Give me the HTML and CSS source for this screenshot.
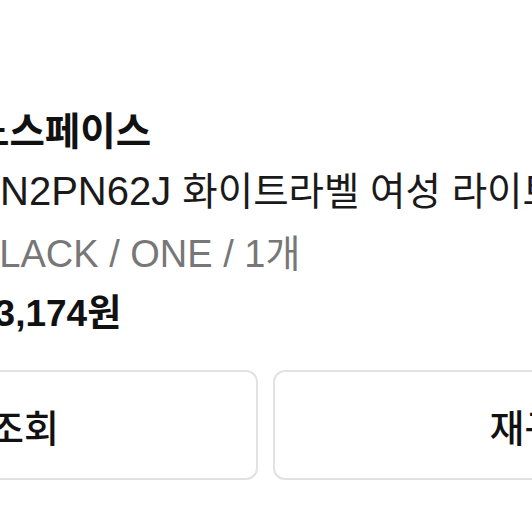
FILE: index.html
```html
<!DOCTYPE html>
<html lang="ko">
  <head>
    <meta charset="UTF-8" />
    <meta name="viewport" content="width=device-width, initial-scale=1.0" />
    <title>주문상세</title>
    <link rel="stylesheet" href="styles.css">
  </head>
  <body>
    <div class="order">
      <div class="info">
        <div class="brand">노스페이스</div>
        <div class="name"><span class="code">N2PN62J </span>화이트라벨 여성 라이트 다운 자켓</div>
        <div class="option">BLACK / ONE / 1개</div>
        <div class="price">83,174원</div>
      </div>
      <div class="btns">
        <button class="btn">배송조회</button>
        <button class="btn">재구매</button>
      </div>
    </div>
  </body>
</html>
```

FILE: styles.css
```css
body {
  margin: 0;
  background-color: white;
  overflow: hidden;
  font-family: "Liberation Sans", "Noto Sans CJK KR", sans-serif;
  color: #111;
}
.order {
  padding-top: 102px;
}
.info {
  margin-left: -26px;
  white-space: nowrap;
}
.brand,
.name,
.option,
.price {
  font-size: 38.5px;
  line-height: 60px;
}
.brand {
  font-weight: bold;
}
.name {
  color: #1a1a1a;
  margin-left: 26px;
}
.code {
  font-size: 40px;
  line-height: 1;
}
.option {
  color: #777;
  font-size: 38px;
  margin-top: 2px;
}
.price {
  font-weight: bold;
  font-size: 37px;
}
/* 버튼 두개 */
.btns {
  display: flex;
  gap: 15px;
  margin-top: 26px;
  margin-left: -280px;
}
.btn {
  flex: none;
  width: 538px;
  height: 110px;
  background-color: white;
  border: 2px solid #e2e2e2;
  border-radius: 12px;
  font-family: "Liberation Sans", "Noto Sans CJK KR", sans-serif;
  font-size: 38px;
  font-weight: 500;
  color: #111;
}
```
